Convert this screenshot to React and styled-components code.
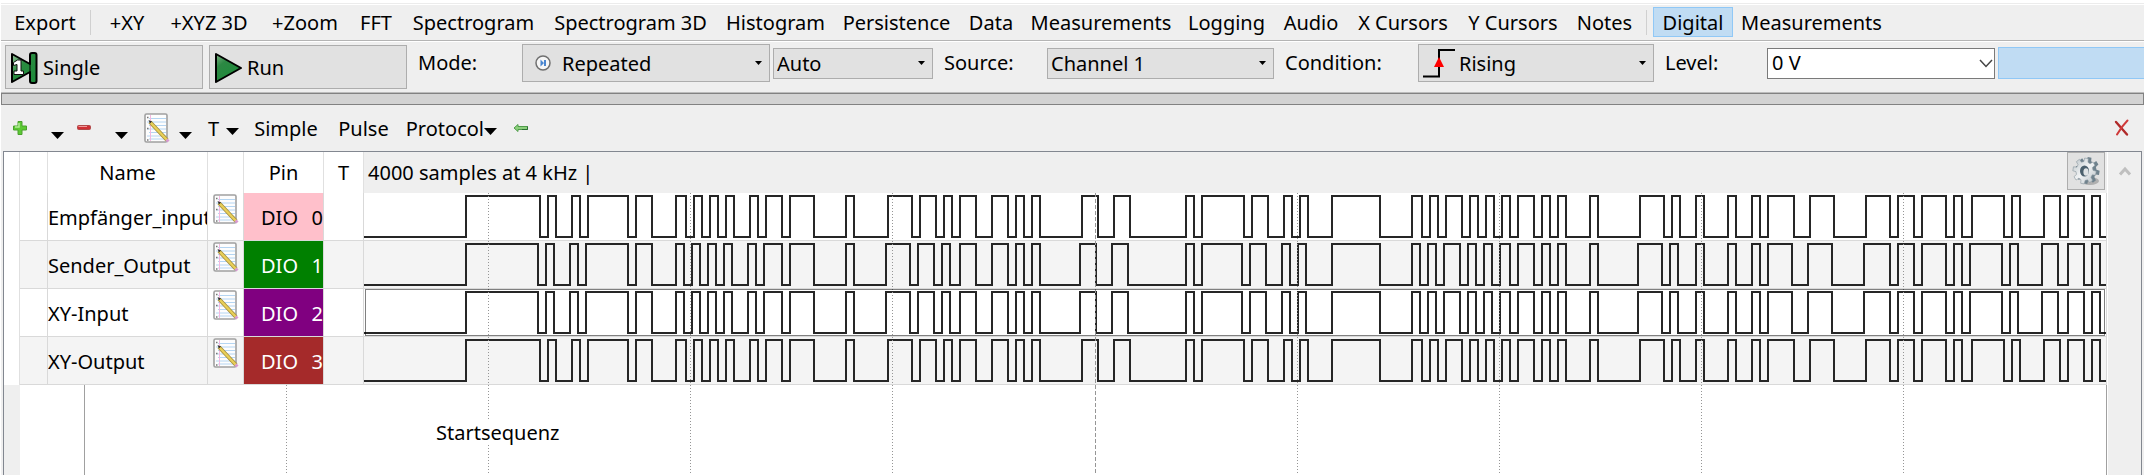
import React from "react";
import styled, { createGlobalStyle } from "styled-components";

const GlobalStyle = createGlobalStyle`
  * { box-sizing: border-box; }
  body { margin: 0; background: #fff; }
  body, button, select, input, table {
    font-family: "Noto Sans", "DejaVu Sans", sans-serif;
    font-size: 20px;
    line-height: 24px;
    color: #000;
  }
  svg { flex: none; }
`;

const Window = styled.div`
  min-height: 100vh;
  display: flex;
  flex-direction: column;
  border-left: 1px solid #fff;
  background: #efefef;
  overflow: hidden;
`;

const TopEdge = styled.div`
  height: 5px;
  flex: none;
  background: linear-gradient(#fff 3px, #ececec 3px, #ececec 4px, #fff 4px);
`;

const MenuBar = styled.nav`
  height: 37px;
  flex: none;
  display: flex;
  align-items: flex-start;
  padding: 2px 4px 0;
  border-bottom: 1px solid #fff;
  box-shadow: inset 0 -1px 0 #b4b4b4;
`;

const MenuItem = styled.button`
  flex: none;
  height: 30px;
  width: ${(p) => p.$width}px;
  padding: 2px 0 0;
  white-space: nowrap;
  border: 1px solid ${(p) => (p.$active ? "#90c8f6" : "transparent")};
  background: ${(p) => (p.$active ? "#c0dcf3" : "transparent")};
`;

const MenuSeparator = styled.span`
  flex: none;
  width: 1px;
  height: 25px;
  margin: 3px 6px 0 5px;
  background: #d0d0d0;
`;

const ControlBar = styled.div`
  height: 51px;
  flex: none;
  display: flex;
  padding: 2px 0 0 4px;
  border-bottom: 1px solid #bcbcbc;
`;

const RunGroup = styled.div`
  display: flex;
  gap: 6px;
  padding-top: 1px;
`;

const RunButton = styled.button`
  width: 198px;
  height: 44px;
  display: flex;
  align-items: center;
  gap: 5px;
  padding: 2px 0 0 4px;
  border: 1px solid #adadad;
  background: #e1e1e1;
`;

const Fields = styled.div`
  flex: 1;
  height: 38px;
  display: flex;
  align-items: center;
`;

const FieldLabel = styled.label`
  flex: none;
  width: ${(p) => p.$width}px;
  padding-left: 11px;
`;

const SelectFrame = styled.div`
  flex: none;
  width: ${(p) => p.$width}px;
  height: ${(p) => (p.$tall ? 38 : 31)}px;
  margin-left: ${(p) => (p.$spaced ? 3 : 0)}px;
  display: flex;
  align-items: center;
  padding: 0 7px 0 3px;
  border: 1px solid #adadad;
  background: #e1e1e1;
`;

const Select = styled.select`
  flex: 1;
  min-width: 0;
  height: 26px;
  padding: 1px 0 0;
  border: 0;
  appearance: none;
  background: transparent;
`;

const Combo = styled.div`
  flex: none;
  width: 228px;
  height: 31px;
  display: flex;
  align-items: center;
  border: 1px solid #7a7a7a;
  background: #fff;
`;

const ComboInput = styled.input`
  flex: 1;
  min-width: 0;
  height: 24px;
  padding: 0 0 0 4px;
  border: 0;
  background: transparent;
`;

const PlainButton = styled.button`
  flex: none;
  display: flex;
  align-items: center;
  justify-content: ${(p) => (p.$end ? "flex-end" : "center")};
  width: ${(p) => p.$width}px;
  height: 30px;
  padding: 0;
  border: 0;
  background: transparent;
  white-space: nowrap;
`;

const TextButton = styled(PlainButton)`
  padding-top: 2px;
`;

const HighlightButton = styled.button`
  flex: 1;
  height: 32px;
  margin-left: 3px;
  border: 1px solid #90c8f6;
  border-right: 0;
  background: #c0dcf3;
`;

const Splitter = styled.div`
  height: 12px;
  flex: none;
  border: 1px solid #828282;
  background: #d3d3d3;
`;

const PanelBar = styled.div`
  height: 46px;
  flex: none;
  display: flex;
  align-items: center;
  padding: 0 12px 0 0;
`;

const Spacer = styled.span`
  flex: 1;
`;

const CaretButton = styled(PlainButton)`
  padding-top: 6px;
`;

const LowCaretButton = styled(PlainButton)`
  justify-content: flex-end;
  padding: 15px 1px 0 0;
`;

const Analyzer = styled.section`
  flex: 1;
  display: flex;
  margin: 0 2px;
  border: 1px solid #828790;
  border-bottom: 0;
`;

const Main = styled.div`
  flex: 1;
  min-width: 0;
  display: flex;
  flex-direction: column;
`;

const Channels = styled.table`
  width: 100%;
  table-layout: fixed;
  border-spacing: 0;
`;

const HeadCell = styled.th`
  height: 41px;
  padding: 0;
  font-weight: normal;
  border-right: 1px solid #e0e0e0;
  background: #fff;
`;

const SampleHead = styled.th`
  height: 41px;
  padding: 0;
  font-weight: normal;
  background: #efefef;
`;

const SampleInfo = styled.div`
  height: 41px;
  display: flex;
  align-items: center;
  justify-content: space-between;
  padding: 0 2px 0 4px;
`;

const GearButton = styled.button`
  align-self: flex-start;
  width: 38px;
  height: 38px;
  padding: 0;
  display: flex;
  align-items: center;
  justify-content: center;
  border: 1px solid #adadad;
  background: #e1e1e1;
`;

const Cell = styled.td`
  height: 48px;
  padding: 0;
  overflow: hidden;
  white-space: nowrap;
  border-right: 1px solid #d9d9d9;
  border-bottom: 1px solid #d9d9d9;
  background: ${(p) => (p.$alt ? "#f4f4f4" : "#fff")};
`;

const GutterCell = styled.td`
  padding: 0;
  border-right: 1px solid #e0e0e0;
  background: #fff;
`;

const NameCell = styled(Cell)`
  padding-top: 2px;
`;

const EditCell = styled(Cell)`
  vertical-align: top;
`;

const EditButton = styled(PlainButton)`
  margin: 1px auto 0;
`;

const PinCell = styled(Cell)`
  padding: 2px 0 0 17px;
  color: ${(p) => p.$ink};
  background: ${(p) => p.$fill};
`;

const PinText = styled.span`
  display: flex;
  justify-content: space-between;
`;

const Wave = styled.svg`
  display: block;
  width: 100%;
  height: 47px;
`;

const PlotRow = styled.div`
  flex: 1;
  min-height: 90px;
  display: flex;
`;

const PlotGutter = styled.div`
  flex: none;
  width: 16px;
`;

const Plot = styled.div`
  position: relative;
  flex: 1;
  border-right: 1px solid #a0a0a0;
  background: #fff;
`;

const PlotGrid = styled.svg`
  position: absolute;
  inset: 0;
  width: 100%;
  height: 100%;
`;

const Note = styled.span`
  position: absolute;
  left: 416px;
  top: 36px;
  background: #fff;
`;

const ScrollBar = styled.div`
  flex: none;
  width: 34px;
  border-left: 1px solid #fff;
  display: flex;
  justify-content: center;
  align-items: flex-start;
  padding-top: 4px;
`;

/* Icons */

const Caret = ({ w = 7, h = 4 }) => (
  <svg width={w} height={h} viewBox="0 0 14 8" preserveAspectRatio="none" aria-hidden="true">
    <path d="M0 0H14L7 8Z" fill="#000" />
  </svg>
);

const SingleIcon = () => (
  <svg width="28" height="32" viewBox="0 0 28 32" aria-hidden="true">
    <defs>
      <linearGradient id="single" x1="0" y1="0" x2="1" y2="1">
        <stop offset="0" stopColor="#9cc7a0" />
        <stop offset=".4" stopColor="#2a8c40" />
        <stop offset="1" stopColor="#1c8a3a" />
      </linearGradient>
    </defs>
    <path d="M2 2L20 12V3Q20 1 22 1H24.500Q26.500 1 26.500 3V29Q26.500 31 24.500 31H22Q20 31 20 29V20L2 30Z" fill="url(#single)" stroke="#000" strokeWidth="2" strokeLinejoin="round" />
    <path d="M20 12V20" stroke="#000" strokeWidth="1" />
    <path d="M3.500 10.500L7.500 8H11V19H13.500V22.500H4V19H7V12.500L3.500 13.500Z" fill="#fff" stroke="#111" strokeWidth="1" />
  </svg>
);

const RunIcon = () => (
  <svg width="28" height="32" viewBox="0 0 28 32" aria-hidden="true">
    <defs>
      <linearGradient id="run" x1="0" y1="0" x2=".7" y2="1">
        <stop offset="0" stopColor="#7fb286" />
        <stop offset=".35" stopColor="#2c8843" />
        <stop offset="1" stopColor="#1d8c3a" />
      </linearGradient>
    </defs>
    <path d="M2 2L27 16L2 30Z" fill="url(#run)" stroke="#000" strokeWidth="2" strokeLinejoin="round" />
  </svg>
);

const RepeatIcon = () => (
  <svg width="36" height="18" viewBox="-8 0 36 18" aria-hidden="true">
    <circle cx="9" cy="9" r="7" fill="#f6f6f6" stroke="#707070" strokeWidth="1.500" />
    <path d="M6.500 5.500L10 9L6.500 12.500ZM10 6H12V12H10Z" fill="#4a86d0" />
  </svg>
);

const RisingIcon = () => (
  <svg width="37" height="32" viewBox="0 0 37 32" aria-hidden="true">
    <path d="M1 29.500H17V3H33" fill="none" stroke="#000" strokeWidth="2" />
    <path d="M17 10L22 20H12Z" fill="#f00" />
  </svg>
);

const NotepadIcon = () => (
  <svg width="26" height="30" viewBox="0 0 26 30" aria-hidden="true">
    <rect x="1" y="1" width="22" height="28" rx="1.500" fill="#fdfdfd" stroke="#a0a0a0" strokeWidth="1.600" />
    <path d="M5 5.500H22M3 9H22M5 12.500H22M3 16H22M5 19.500H22M3 23H22M5 26H22" stroke="#b4d5f2" strokeWidth="1" />
    <path d="M6.500 2V28" stroke="#f3b8e0" strokeWidth="1" />
    <path d="M3 4.500H4.500M3 15.500H4.500M3 27H4.500" stroke="#777" strokeWidth="1.500" />
    <path d="M6 9L23 27" stroke="#a08a3a" strokeWidth="4" />
    <path d="M6.500 9.500L23 27" stroke="#e8cf58" strokeWidth="2.500" />
    <path d="M4.500 7L8 8.500L6 10.500Z" fill="#333" />
    <path d="M22.500 26.500L24.500 28.500" stroke="#d79ad0" strokeWidth="3" />
  </svg>
);

const PlusIcon = () => (
  <svg width="16" height="16" viewBox="0 0 16 16" aria-hidden="true">
    <path d="M6 1.500H10V6H14.500V10H10V14.500H6V10H1.500V6H6Z" fill="#5cc934" stroke="#4aa02c" strokeLinejoin="round" />
    <path d="M7 3V7H3" fill="none" stroke="#b4ec98" strokeWidth="1.500" />
  </svg>
);

const MinusIcon = () => (
  <svg width="16" height="16" viewBox="0 0 16 16" aria-hidden="true">
    <rect x="1.500" y="5.500" width="13" height="4" rx="1" fill="#cf2f35" stroke="#b04a4a" />
    <path d="M2.500 6.500H11" stroke="#f09a9a" />
  </svg>
);

const BackIcon = () => (
  <svg width="16" height="10" viewBox="0 0 16 10" aria-hidden="true">
    <path d="M1 5L5 1.500V3.500H14.500V6.500H5V8.500Z" fill="#8ccf7c" stroke="#4f9c4a" strokeLinejoin="round" />
    <path d="M9 6.500H14.500V3.500" fill="none" stroke="#2c6e33" />
  </svg>
);

const CloseIcon = () => (
  <svg width="16" height="18" viewBox="0 0 16 18" aria-hidden="true">
    <path d="M2 3L13 15.500" stroke="#b02a2a" strokeWidth="2.400" strokeLinecap="round" />
    <path d="M13.500 1.500Q8 7 3 15.500" fill="none" stroke="#cf3a3a" strokeWidth="2" strokeLinecap="round" />
  </svg>
);

const ChevronDown = () => (
  <svg width="14" height="9" viewBox="0 0 14 9" aria-hidden="true">
    <path d="M1 1L7 7.500L13 1" fill="none" stroke="#444" strokeWidth="1.500" />
  </svg>
);

const ChevronUp = () => (
  <svg width="14" height="10" viewBox="0 0 14 10" aria-hidden="true">
    <path d="M2 8.500L7 3L12 8.500" fill="none" stroke="#bfbfbf" strokeWidth="3" />
  </svg>
);

// Outline of an eight-toothed wheel round (cx, cy), slightly narrower than tall.
const wheelPath = (cx, cy, outer, inner) => {
  const points = [];
  for (let tooth = 0; tooth < 8; tooth += 1) {
    [[-14, inner], [-9, outer], [9, outer], [14, inner]].forEach(([offset, r]) => {
      const a = ((tooth * 45 + 10 + offset) * Math.PI) / 180;
      points.push(`${(cx + 0.9 * r * Math.cos(a)).toFixed(2)} ${(cy + r * Math.sin(a)).toFixed(2)}`);
    });
  }
  return `M${points.join("L")}Z`;
};

const GearIcon = () => (
  <svg width="30" height="30" viewBox="0 0 30 30" aria-hidden="true">
    <defs>
      <linearGradient id="gear" x1="0" y1="0" x2="1" y2="1">
        <stop offset="0" stopColor="#b9c2c7" />
        <stop offset=".5" stopColor="#f2f4f5" />
        <stop offset="1" stopColor="#b4bdc2" />
      </linearGradient>
    </defs>
    <ellipse cx="19" cy="25" rx="9" ry="4" fill="#9a9a9a" opacity=".7" />
    <path d={wheelPath(16.5, 14.5, 13.5, 10)} fill="#6f828d" />
    <path d={wheelPath(13.5, 15, 13, 9.5)} fill="url(#gear)" stroke="#8a979f" strokeWidth="0.6" />
    <ellipse cx="13.500" cy="15" rx="4.500" ry="5.500" fill="#4b606d" />
    <ellipse cx="15" cy="16" rx="2.600" ry="3.800" fill="#dfe3e5" />
  </svg>
);

/* Data */

const MENU = [
  ["Export", 80], null,
  ["+XY", 60], ["+XYZ 3D", 104], ["+Zoom", 88], ["FFT", 54], ["Spectrogram", 141],
  ["Spectrogram 3D", 173], ["Histogram", 117], ["Persistence", 125], ["Data", 64],
  ["Measurements", 156], ["Logging", 95], ["Audio", 74], ["X Cursors", 110],
  ["Y Cursors", 110], ["Notes", 73], null,
  ["Digital", 80], ["Measurements", 157],
];

// Level changes of each signal, in plot units; every signal starts low.
const PLOT_START = 364;
const PLOT_WIDTH = 1742;

const RECEIVED = [
  466, 540, 548, 556, 572, 580, 588, 628, 636, 652, 676, 686, 694, 702, 710, 718, 726, 734, 750, 758, 766, 782, 790,
  814, 846, 854, 888, 912, 920, 936, 944, 952, 960, 976, 992, 1008, 1016, 1024, 1032, 1040, 1082, 1098, 1114, 1130,
  1186, 1194, 1202, 1244, 1252, 1268, 1284, 1292, 1300, 1308, 1332, 1380, 1412, 1422, 1430, 1438, 1446, 1462, 1470,
  1478, 1486, 1494, 1502, 1510, 1518, 1534, 1542, 1550, 1558, 1566, 1590, 1598, 1640, 1664, 1672, 1680, 1696, 1704,
  1728, 1736, 1752, 1760, 1768, 1794, 1810, 1834, 1866, 1890, 1898, 1914, 1922, 1946, 1954, 1962, 1972, 2004, 2012,
  2020, 2044, 2060, 2068, 2084, 2092, 2100,
];

const SENT = [
  466, 538, 546, 554, 570, 578, 586, 628, 636, 652, 676, 684, 692, 700, 708, 716, 724, 732, 748, 756, 764, 782, 790,
  814, 846, 854, 886, 910, 918, 934, 942, 950, 960, 976, 992, 1008, 1016, 1024, 1032, 1040, 1080, 1096, 1112, 1128,
  1186, 1194, 1202, 1242, 1250, 1266, 1282, 1290, 1298, 1306, 1332, 1380, 1412, 1420, 1428, 1436, 1444, 1460, 1468,
  1476, 1484, 1492, 1500, 1510, 1518, 1534, 1542, 1550, 1558, 1566, 1590, 1598, 1638, 1662, 1670, 1678, 1696, 1704,
  1728, 1736, 1752, 1760, 1768, 1792, 1808, 1832, 1864, 1890, 1898, 1914, 1922, 1946, 1954, 1962, 1970, 2002, 2010,
  2018, 2042, 2058, 2068, 2084, 2092, 2100,
];

const GRID = [286, 488, 690, 892, 1297, 1499, 1701, 1903];
const CENTER = 1095;

const CHANNELS = [
  { name: "Empfänger_input", pin: 0, fill: "#ffc0cb", ink: "#000", edges: RECEIVED },
  { name: "Sender_Output", pin: 1, fill: "#008000", ink: "#fff", edges: SENT },
  { name: "XY-Input", pin: 2, fill: "#800080", ink: "#fff", edges: SENT, focused: true },
  { name: "XY-Output", pin: 3, fill: "#a52a2a", ink: "#fff", edges: RECEIVED },
];

const wavePath = (edges) =>
  edges.reduce((d, x, i) => `${d}H${x - PLOT_START}V${i % 2 ? 44 : 3}`, "M0 44") + `H${PLOT_WIDTH}`;

const GridLines = ({ origin, height }) => (
  <g stroke="#969696">
    {GRID.filter((x) => x > origin).map((x) => (
      <line key={x} x1={x - origin + 0.5} x2={x - origin + 0.5} y1="0" y2={height} strokeDasharray="1 2" />
    ))}
    <line x1={CENTER - origin + 0.5} x2={CENTER - origin + 0.5} y1="0" y2={height} strokeDasharray="4 2" />
  </g>
);

const Waveform = ({ channel }) => (
  <Wave viewBox={`0 0 ${PLOT_WIDTH} 47`} preserveAspectRatio="none" role="img" aria-label={channel.name}>
    <path d={wavePath(channel.edges)} fill="none" stroke="#262626" strokeWidth="2" />
    <GridLines origin={PLOT_START} height={47} />
    {channel.focused && (
      <rect x="1.5" y="0.5" width={PLOT_WIDTH - 3} height="46" fill="none" stroke="#000" strokeDasharray="1 1" />
    )}
  </Wave>
);

const SelectField = ({ id, label, value, width, tall, spaced, icon }) => (
  <SelectFrame $width={width} $tall={tall} $spaced={spaced}>
    {icon}
    <Select id={id} aria-label={label} defaultValue={value}>
      <option>{value}</option>
    </Select>
    <Caret />
  </SelectFrame>
);

export default function App() {
  return (
    <Window>
      <GlobalStyle />
      <TopEdge />
      <MenuBar>
        {MENU.map((item, i) =>
          item ? (
            <MenuItem key={i} $width={item[1]} $active={item[0] === "Digital"}>{item[0]}</MenuItem>
          ) : (
            <MenuSeparator key={i} />
          )
        )}
      </MenuBar>

      <ControlBar>
        <RunGroup>
          <RunButton><SingleIcon />Single</RunButton>
          <RunButton><RunIcon />Run</RunButton>
        </RunGroup>
        <Fields>
          <FieldLabel htmlFor="mode" $width={115}>Mode:</FieldLabel>
          <SelectField id="mode" value="Repeated" width={248} tall icon={<RepeatIcon />} />
          <SelectField id="auto" label="Trigger mode" value="Auto" width={160} spaced />
          <FieldLabel htmlFor="source" $width={114}>Source:</FieldLabel>
          <SelectField id="source" value="Channel 1" width={227} />
          <FieldLabel htmlFor="condition" $width={144}>Condition:</FieldLabel>
          <SelectField id="condition" value="Rising" width={236} tall icon={<RisingIcon />} />
          <FieldLabel htmlFor="level" $width={113}>Level:</FieldLabel>
          <Combo>
            <ComboInput id="level" type="text" defaultValue="0 V" />
            <PlainButton $width={16} aria-label="Level values"><ChevronDown /></PlainButton>
          </Combo>
          <HighlightButton aria-label="Trigger options" />
        </Fields>
      </ControlBar>

      <Splitter />

      <PanelBar>
        <PlainButton $width={38} aria-label="Add"><PlusIcon /></PlainButton>
        <LowCaretButton $width={26} aria-label="Add menu"><Caret w={13} h={7} /></LowCaretButton>
        <PlainButton $width={38} aria-label="Remove"><MinusIcon /></PlainButton>
        <LowCaretButton $width={26} aria-label="Remove menu"><Caret w={13} h={7} /></LowCaretButton>
        <PlainButton $width={41} $end aria-label="Edit"><NotepadIcon /></PlainButton>
        <LowCaretButton $width={23} aria-label="Edit menu"><Caret w={13} h={7} /></LowCaretButton>
        <TextButton $width={26} $end>T</TextButton>
        <CaretButton $width={26} aria-label="Trigger menu"><Caret w={13} h={7} /></CaretButton>
        <TextButton $width={82}>Simple</TextButton>
        <TextButton $width={73}>Pulse</TextButton>
        <TextButton $width={84} $end>Protocol</TextButton>
        <CaretButton $width={12} aria-label="Protocol menu"><Caret w={13} h={7} /></CaretButton>
        <PlainButton $width={50} aria-label="Back"><BackIcon /></PlainButton>
        <Spacer />
        <PlainButton $width={20} aria-label="Close"><CloseIcon /></PlainButton>
      </PanelBar>

      <Analyzer>
        <Main>
          <Channels>
            <colgroup>
              <col width="16" />
              <col width="28" />
              <col width="160" />
              <col width="36" />
              <col width="80" />
              <col width="40" />
              <col />
            </colgroup>
            <thead>
              <tr>
                <HeadCell />
                <HeadCell />
                <HeadCell>Name</HeadCell>
                <HeadCell />
                <HeadCell>Pin</HeadCell>
                <HeadCell>T</HeadCell>
                <SampleHead>
                  <SampleInfo>
                    4000 samples at 4 kHz |
                    <GearButton aria-label="Settings"><GearIcon /></GearButton>
                  </SampleInfo>
                </SampleHead>
              </tr>
            </thead>
            <tbody>
              {CHANNELS.map((c, i) => (
                <tr key={c.name}>
                  <GutterCell />
                  <Cell $alt={i % 2} />
                  <NameCell $alt={i % 2}>{c.name}</NameCell>
                  <EditCell $alt={i % 2}>
                    <EditButton $width={26} aria-label={`Edit ${c.name}`}><NotepadIcon /></EditButton>
                  </EditCell>
                  <PinCell $fill={c.fill} $ink={c.ink}>
                    <PinText><span>DIO</span><span>{c.pin}</span></PinText>
                  </PinCell>
                  <Cell $alt={i % 2} />
                  <Cell $alt={i % 2}><Waveform channel={c} /></Cell>
                </tr>
              ))}
            </tbody>
          </Channels>
          <PlotRow>
            <PlotGutter />
            <Plot>
              <PlotGrid viewBox="0 0 2086 90" preserveAspectRatio="none" aria-hidden="true">
                <line x1="64.5" x2="64.5" y1="0" y2="90" stroke="#a0a0a0" />
                <GridLines origin={20} height={90} />
              </PlotGrid>
              <Note>Startsequenz</Note>
            </Plot>
          </PlotRow>
        </Main>
        <ScrollBar>
          <PlainButton $width={20} aria-label="Scroll up"><ChevronUp /></PlainButton>
        </ScrollBar>
      </Analyzer>
    </Window>
  );
}
